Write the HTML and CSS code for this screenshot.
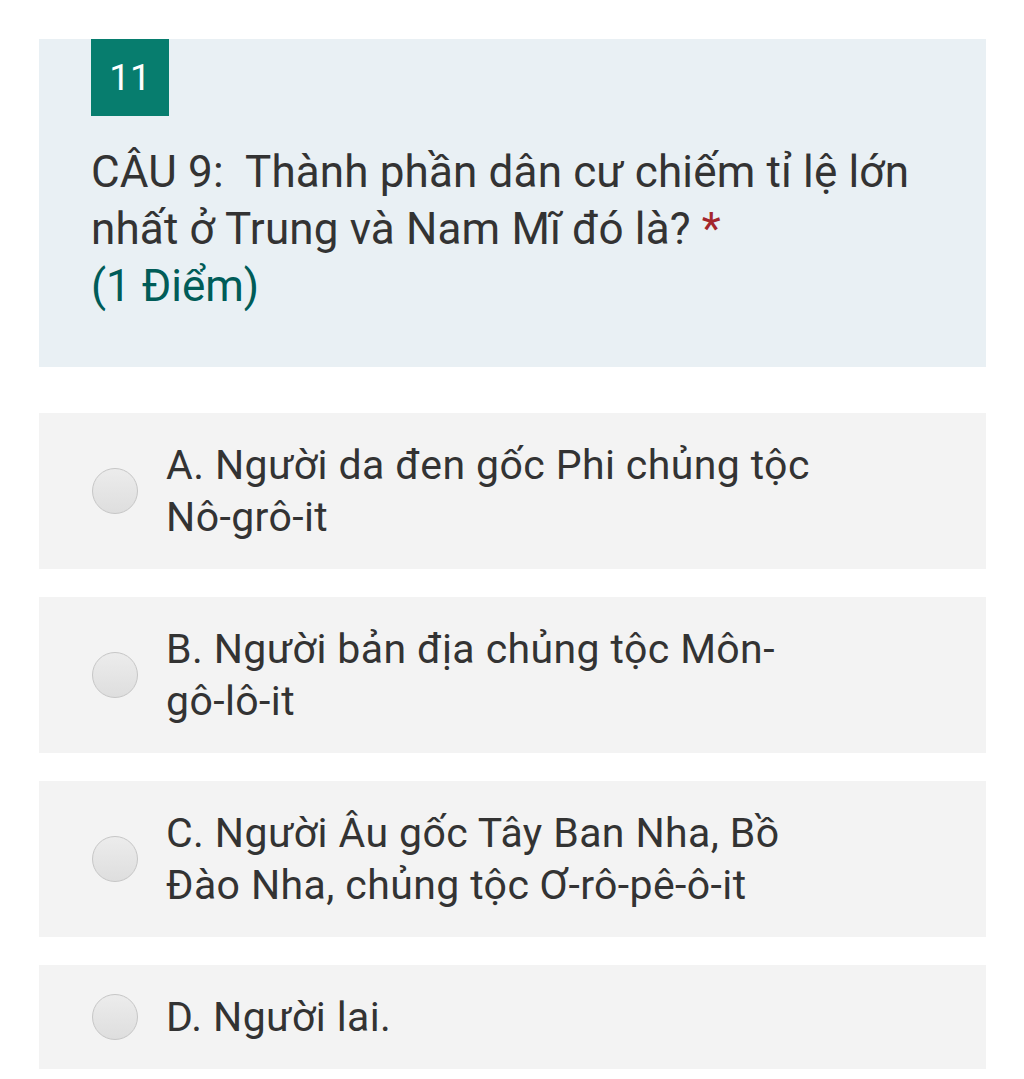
FILE: index.html
```html
<!DOCTYPE html>
<html lang="vi">
<head>
<meta charset="utf-8">
<link rel="stylesheet" href="styles.css">
</head>
<body>
<div class="page">
  <div class="question">
    <div class="badge">11</div>
    <div class="title">CÂU 9:&nbsp; Thành phần dân cư chiếm tỉ lệ lớn nhất ở Trung và Nam Mĩ đó là? <span class="req">*</span></div>
    <div class="points">(1 Điểm)</div>
  </div>
  <div class="options">
    <div class="option"><span class="radio"></span><span class="label">A. Người da đen gốc Phi chủng tộc Nô-grô-it</span></div>
    <div class="option"><span class="radio"></span><span class="label">B. Người bản địa chủng tộc Môn-gô-lô-it</span></div>
    <div class="option"><span class="radio"></span><span class="label">C. Người Âu gốc Tây Ban Nha, Bồ Đào Nha, chủng tộc Ơ-rô-pê-ô-it</span></div>
    <div class="option"><span class="radio"></span><span class="label">D. Người lai.</span></div>
  </div>
</div>
</body>
</html>
```
FILE: styles.css
```css
html, body { margin: 0; padding: 0; background: #ffffff; }
body { font-family: Roboto, "Noto Sans", sans-serif; color: #333333; }
.page { width: 947px; margin: 39px 0 0 39px; }
.question {
  background: #e9f0f4;
  padding: 0 52px 52px 52px;
}
.badge {
  width: 78px; height: 77px;
  background: #077d6e;
  color: #ffffff;
  font-size: 37px;
  display: flex; align-items: center; justify-content: center;
  margin-bottom: 28px;
}
.title { font-size: 44px; line-height: 57px; letter-spacing: 0.15px; }
.req { color: #a4262c; }
.points { font-size: 44px; line-height: 57px; color: #005c58; }
.options { margin-top: 46px; display: flex; flex-direction: column; gap: 28px; }
.option {
  background: #f3f3f3;
  padding: 26px 0 26px 53px;
  display: flex; align-items: center;
}
.radio {
  flex: none;
  width: 44px; height: 44px;
  border-radius: 50%;
  border: 1px solid #c6c6c6;
  background: linear-gradient(#ececec, #dedede);
  margin-right: 28px;
}
.label { font-size: 41px; line-height: 52px; letter-spacing: 0.4px; max-width: 660px; }
```
